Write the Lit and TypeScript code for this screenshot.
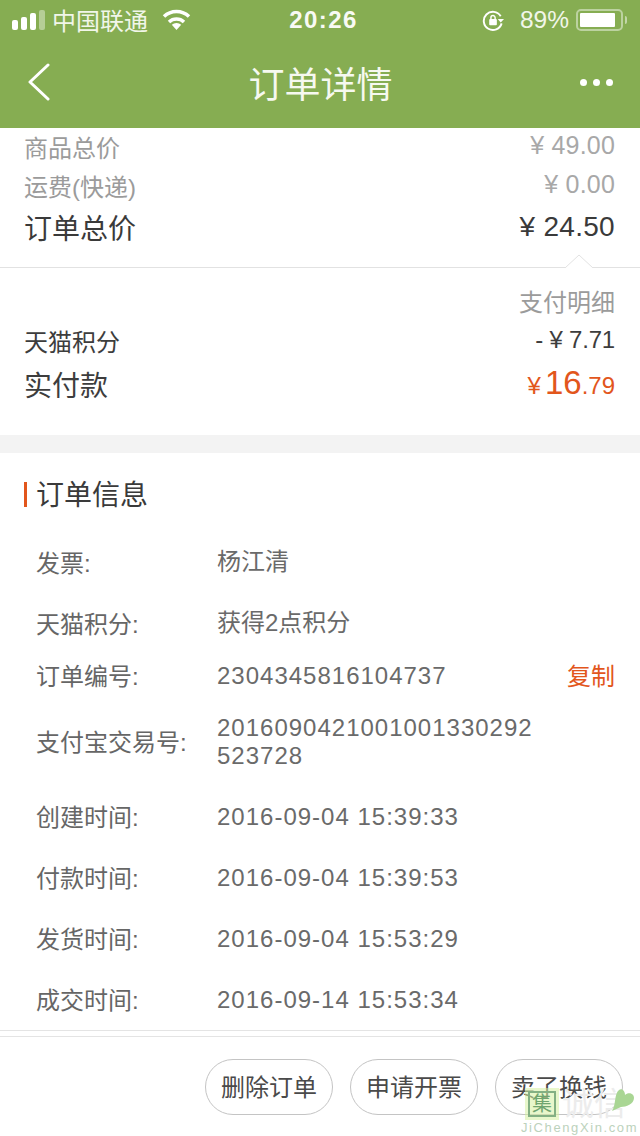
import { LitElement, html, css } from "lit";
import { customElement } from "lit/decorators.js";

const info: [string, string, boolean, string?][] = [
  ["发票:", "杨江清", false],
  ["天猫积分:", "获得2点积分", false],
  ["订单编号:", "2304345816104737", true, "复制"],
  ["支付宝交易号:", "2016090421001001330292523728", true],
  ["创建时间:", "2016-09-04 15:39:33", true],
  ["付款时间:", "2016-09-04 15:39:53", true],
  ["发货时间:", "2016-09-04 15:53:29", true],
  ["成交时间:", "2016-09-14 15:53:34", true],
];
const heights = [61, 61, 43, 89, 61, 61, 61, 61];

@customElement("app-root")
export class AppRoot extends LitElement {
  static styles = css`
    :host {
      display: block;
      position: relative;
      width: 640px;
      height: 1136px;
      overflow: hidden;
      background: #fff;
      font-family: "Liberation Sans", "Noto Sans CJK SC", sans-serif;
      color: #3d3d3d;
    }
    .header { background: #86ad52; height: 128px; color: #fff; display: flex; flex-direction: column; }
    .status { height: 40px; display: grid; grid-template-columns: 1fr auto 1fr; align-items: center; padding: 0 11px 0 12px; font-size: 24px; color: #f1f6e9; }
    .s-left { display: flex; align-items: center; }
    .signal { display: flex; align-items: flex-end; gap: 3px; height: 20px; margin-right: 7px; }
    .signal i { display: block; width: 6px; background: #fff; border-radius: 2px; }
    .signal i.off { background: rgba(255,255,255,.4); }
    .carrier { margin-bottom: 2px; }
    .wifi { margin-left: 14px; margin-bottom: 2px; }
    .time { font-weight: 700; font-size: 24px; letter-spacing: 1.4px; color: #f8faf4; margin-left: 6px; }
    .s-right { display: flex; align-items: center; justify-content: flex-end; }
    .pct { margin: 0 7px 0 15px; font-size: 24.500px; }
    .battery { width: 47px; height: 22px; border: 2px solid rgba(255,255,255,.45); border-radius: 5px; padding: 2px; box-sizing: border-box; }
    .battery i { display: block; height: 100%; width: 89%; background: #fff; border-radius: 1px; }
    .nub { width: 2px; height: 8px; margin: 0 2px 0 2px; background: rgba(255,255,255,.5); border-radius: 0 2px 2px 0; }
    .nav { flex: 1; display: grid; grid-template-columns: 1fr auto 1fr; align-items: center; padding: 0 27px 4px 28px; }
    .title { font-size: 36px; color: #f6f9f0; }
    .dots { display: flex; justify-content: flex-end; gap: 6px; }
    .dots i { width: 7px; height: 7px; border-radius: 50%; background: #fff; display: block; }

    .sum { padding: 0 25px 0 24px; height: 140px; box-sizing: border-box; border-bottom: 1px solid #e2e2e2; position: relative; }
    .row { display: flex; justify-content: space-between; align-items: center; }
    .r1 { height: 36px; font-size: 24px; color: #9b9b9b; }
    .r2 { height: 42px; font-size: 24px; color: #9b9b9b; }
    .r3 { height: 42px; font-size: 28px; color: #3a3a3a; }
    .r1 .v, .r2 .v { font-size: 25px; color: #a8a8a8; margin-bottom: 2px; letter-spacing: .2px; }
    .r3 .v { letter-spacing: .3px; font-size: 28px; }
    .notch { position: absolute; right: 46px; bottom: -1px; width: 30px; height: 14px; }

    .pay { padding: 0 25px 0 24px; height: 185px; box-sizing: border-box; border-bottom: 18px solid #f3f3f3; }
    .p-head { height: 64px; display: flex; justify-content: flex-end; align-items: center; font-size: 24px; color: #9b9b9b; }
    .p1 { height: 8px; margin-top: 4px; font-size: 24px; color: #3d3d3d; }
    .p1 .v { margin-bottom: 1px; letter-spacing: -.2px; }
    .p2 { height: 48px; font-size: 28px; margin-top: 16px; }
    .pv { color: #e2561c; font-size: 24px; display: flex; align-items: baseline; margin-bottom: 2px; }
    .pv b { font-size: 33px; font-weight: 400; margin-left: 4px; }

    .title2 { height: 79px; display: flex; align-items: center; padding: 3px 0 0 24px; font-size: 28px; color: #3a3a3a; box-sizing: border-box; }
    .title2 i { width: 3px; height: 25px; background: #e2561c; display: block; margin-right: 9px; }
    .title2 span { margin-bottom: 3px; }
    .info { padding: 0 25px 0 36px; }
    .irow { display: flex; align-items: center; font-size: 24px; color: #666; }
    .lab { width: 181px; flex: none; margin-bottom: 3px; }
    .val { flex: none; color: #6a6a6a; width: 322px; line-height: 28px; word-break: break-all; }
    .val.num { letter-spacing: 1px; }
    .val.cjk { margin-bottom: 2px; }
    .copy { color: #e2561c; margin-left: auto; margin-bottom: 3px; }
    .rule { height: 1px; background: #e4e4e4; }
    .foot { border-top: 1px solid #e4e4e4; margin-top: 5px; display: flex; justify-content: flex-end; gap: 17px; padding: 22px 17px 0 0; }
    .btn { width: 128px; height: 56px; box-sizing: border-box; border: 1px solid #c4c4c4; border-radius: 28px; display: flex; align-items: center; justify-content: center; padding-bottom: 3px; font-size: 24px; color: #4a4a4a; background: transparent; }

    .mark { position: absolute; left: 520px; top: 1088px; width: 120px; height: 48px; pointer-events: none; }
    .seal { position: absolute; left: 5px; top: 0; width: 34px; height: 32px; background: rgba(214,240,160,.55); padding: 3px; box-sizing: border-box; }
    .seal span { display: block; height: 100%; border: 2px solid #83b083; box-sizing: border-box; color: #6fa56f; font-size: 20px; line-height: 22px; text-align: center; }
    .cx { position: absolute; left: 42px; top: -2px; font-size: 32px; line-height: 36px; color: #ececec; white-space: nowrap; }
    .heart { position: absolute; left: 90px; top: 0; }
    .url { position: absolute; left: 1px; top: 32px; font-size: 13px; letter-spacing: 1.600px; color: #bcd2bc; white-space: nowrap; line-height: 16px; }
  `;

  render() {
    return html`
      <div class="header">
        <div class="status">
          <div class="s-left">
            <div class="signal">
              <i style="height:10px"></i><i style="height:13px"></i><i style="height:17px"></i><i class="off" style="height:20px"></i>
            </div>
            <span class="carrier">中国联通</span>
            <svg class="wifi" width="29" height="21" viewBox="0 0 29 21" fill="none" stroke="#fff" stroke-width="3.500">
              <path d="M2 7.500a18 18 0 0 1 25 0"/>
              <path d="M7 13a11 11 0 0 1 15 0"/>
              <path d="M14.500 21l-4.700-5.200a7 7 0 0 1 9.400 0z" fill="#fff" stroke="none"/>
            </svg>
          </div>
          <div class="time">20:26</div>
          <div class="s-right">
            <svg width="23" height="23" viewBox="0 0 24 24" fill="none" stroke="#fff" stroke-width="2">
              <path d="M19.500 7.500A9.500 9.500 0 1 0 20.500 15"/>
              <path d="M23 10.500l-3.500 3.500-3-3.500z" fill="#fff" stroke="none"/>
              <rect x="7.500" y="10.500" width="8" height="6.500" rx="1" fill="#fff" stroke="none"/>
              <path d="M9.300 10.500V9a2.200 2.200 0 0 1 4.400 0v1.500" stroke-width="1.500"/>
            </svg>
            <span class="pct">89%</span>
            <div class="battery"><i></i></div>
            <div class="nub"></div>
          </div>
        </div>
        <div class="nav">
          <svg width="22" height="38" viewBox="0 0 22 38" fill="none" stroke="#fff" stroke-width="3" stroke-linecap="round" stroke-linejoin="round">
            <path d="M20 2L2 19l18 17"/>
          </svg>
          <div class="title">订单详情</div>
          <div class="dots"><i></i><i></i><i></i></div>
        </div>
      </div>

      <div class="sum">
        <div class="row r1"><span>商品总价</span><span class="v">¥ 49.00</span></div>
        <div class="row r2"><span>运费(快递)</span><span class="v">¥ 0.00</span></div>
        <div class="row r3"><span>订单总价</span><span class="v">¥ 24.50</span></div>
        <svg class="notch" viewBox="0 0 30 14" fill="#fff" stroke="#e2e2e2"><path d="M1 14L15 1l14 13"/></svg>
      </div>

      <div class="pay">
        <div class="p-head">支付明细</div>
        <div class="row p1"><span>天猫积分</span><span class="v">- ¥ 7.71</span></div>
        <div class="row p2"><span>实付款</span><span class="pv">¥<b>16</b>.79</span></div>
      </div>

      <div class="title2"><i></i><span>订单信息</span></div>
      <div class="info">
        ${info.map(([l, v, num, c], i) => html`
          <div class="irow" style="height:${heights[i]}px">
            <div class="lab">${l}</div>
            <div class="val ${num ? "num" : "cjk"}">${v}</div>
            ${c ? html`<div class="copy">${c}</div>` : ""}
          </div>`)}
      </div>
      <div class="rule"></div>
      <div class="foot">
        <div class="btn">删除订单</div>
        <div class="btn">申请开票</div>
        <div class="btn">卖了换钱</div>
      </div>

      <div class="mark">
        <div class="seal"><span>集</span></div>
        <div class="cx">诚信</div>
        <svg class="heart" width="26" height="24" viewBox="0 0 26 24"><path d="M2 23C6 18 4 6 9 2c3-2 6 1 6 5 3-3 9-2 9 3 0 6-8 9-13 9z" fill="#a9d694"/></svg>
        <div class="url">JiChengXin.com</div>
      </div>
    `;
  }
}
